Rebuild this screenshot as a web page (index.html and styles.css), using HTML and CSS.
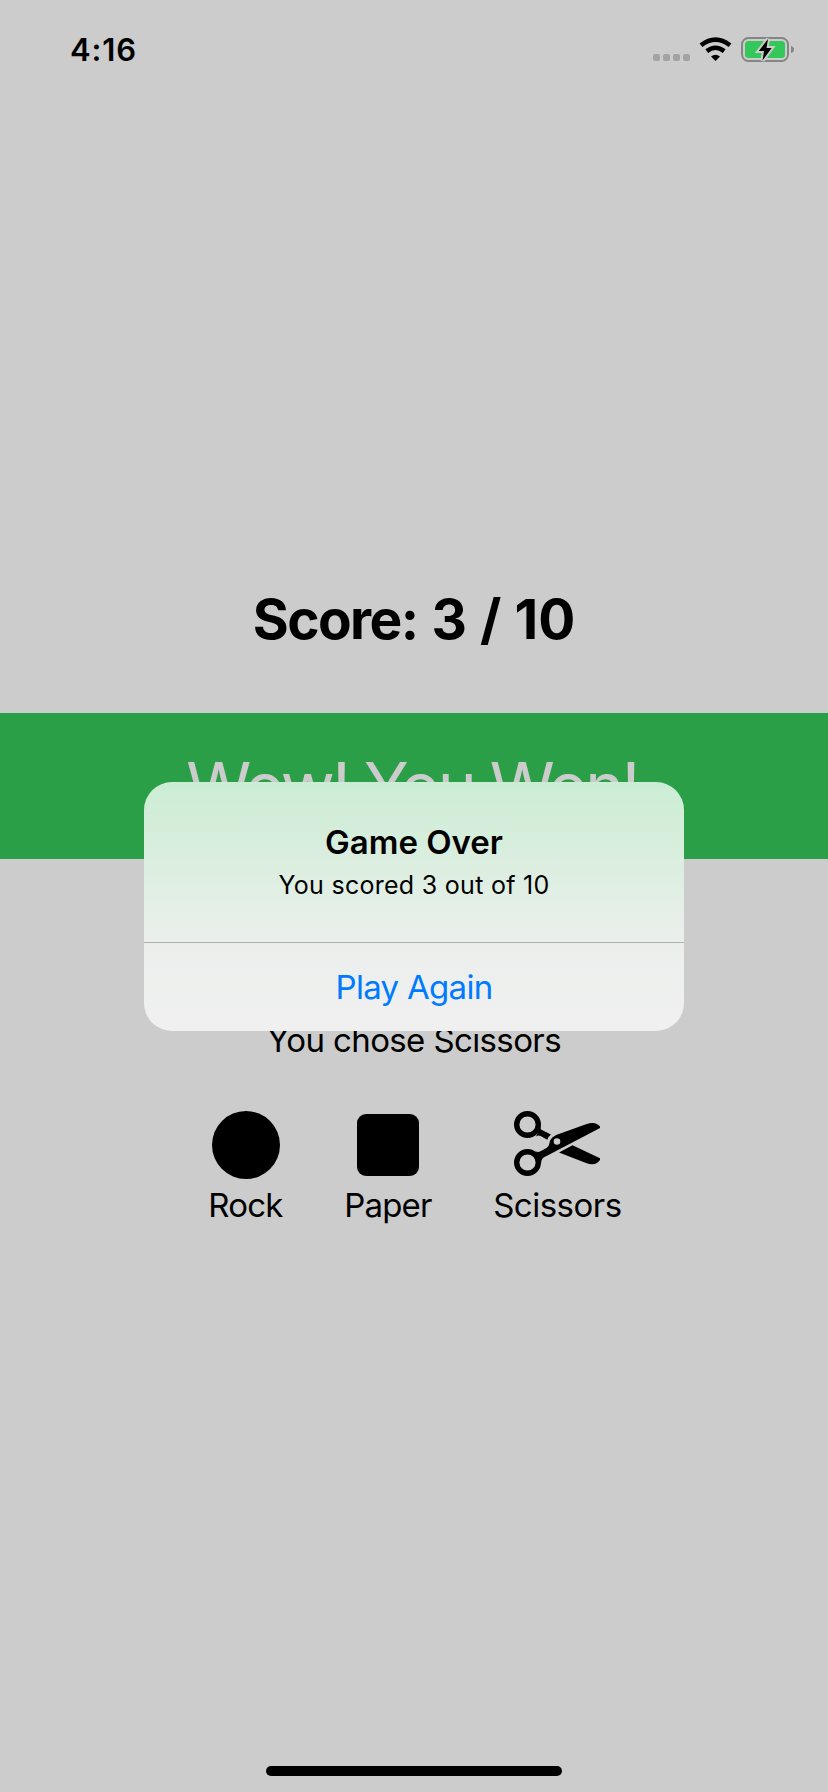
FILE: index.html
```html
<!DOCTYPE html>
<html lang="en">
<head>
<meta charset="utf-8">
<title>Rock Paper Scissors</title>
<link rel="stylesheet" href="styles.css">
</head>
<body>
<div class="screen">
  <header class="status">
    <span class="time">4:16</span>
    <svg class="indicators" width="142" height="26" viewBox="0 0 142 26">
      <g fill="#a3a3a3"><rect x="0" y="17" width="7" height="7" rx="2"/><rect x="10" y="17" width="7" height="7" rx="2"/><rect x="20" y="17" width="7" height="7" rx="2"/><rect x="30" y="17" width="7" height="7" rx="2"/></g>
      <g fill="none" stroke="#000" stroke-width="4.6"><path d="M48 8.3Q62.500 -2.900 77 8.300"/><path d="M53.800 14.100Q62.500 7.400 71.200 14.100"/></g>
      <path d="M58 19.500Q62.500 16.200 67 19.500L62.500 24Z"/>
      <rect x="89" y="1" width="46" height="23" rx="6.500" fill="none" stroke="#858585" stroke-width="2"/>
      <rect x="92" y="4" width="40" height="17" rx="3.500" fill="#34c759"/>
      <path d="M138 9Q141 10 141 12.500T138 16Z" fill="#858585"/>
      <path d="M115 2L105.800 14h5.200L109.500 23.500 118.700 11h-5.200Z" fill="#000" stroke="#ccc" stroke-width="4" paint-order="stroke"/>
    </svg>
  </header>
  <h1 class="score"><span class="label">Score:</span> 3 / 10</h1>
  <div class="banner"><span>Wow! You Won!</span></div>
  <p class="choice">You chose Scissors</p>
  <div class="options">
    <div class="option rock">
      <svg width="68" height="68" viewBox="0 0 68 68"><circle cx="34" cy="34" r="34"/></svg>
      <span>Rock</span>
    </div>
    <div class="option paper">
      <svg width="62" height="68" viewBox="0 0 62 68"><rect y="3" width="62" height="62" rx="9"/></svg>
      <span>Paper</span>
    </div>
    <div class="option scissors">
      <svg width="86" height="68" viewBox="0 0 86 68">
        <g fill="none" stroke="#000" stroke-width="5.400"><circle cx="13.500" cy="13.500" r="10.800"/><circle cx="13.500" cy="51.500" r="10.800"/></g>
        <path d="M26.700 15.500Q25.800 18 28 19L37 23.500Q34.300 25.500 33.300 28.700L26.500 25Q24.500 24 22 25.500Z"/>
        <path fill-rule="evenodd" d="M21.500 40.200Q24 41.600 26.500 40.200L32.500 37Q35 35.700 35.200 33Q35.600 27.500 41 24.700Q42 24.100 43.500 23.500L72 13.300Q81.500 9.800 86 15.500V17L33 44.700Q27 46.800 27.200 52Z M43 27.200a3.300 3.300 0 1 0 0 6.600a3.300 3.300 0 1 0 0 -6.600Z"/>
        <path d="M45 41.500L58.500 34.200L86 47.300V49Q81.500 55.500 72 52Z"/>
      </svg>
      <span>Scissors</span>
    </div>
  </div>
  <div class="home"></div>
  <div class="alert" role="alertdialog">
    <h2 class="title">Game Over</h2>
    <p class="message">You scored 3 out of 10</p>
    <button class="again"><span>Play Again</span></button>
  </div>
</div>
</body>
</html>
```

FILE: styles.css
```css
* { box-sizing: border-box; margin: 0; padding: 0; }
body { background: #ccc; color: #000; font-family: Inter, Roboto, sans-serif; }
.screen { position: relative; width: 828px; height: 1792px; display: flex; flex-direction: column; align-items: center; overflow: hidden; white-space: nowrap; }
.status { width: 100%; height: 74px; padding: 26px 33px 0 70px; display: flex; justify-content: space-between; align-items: flex-start; }
.time { font-size: 31px; font-weight: 600; line-height: 48px; letter-spacing: 0.9px; }
.indicators { margin-top: 11px; }
.score { margin-top: 512px; font-size: 55px; font-weight: 700; line-height: 66px; }
.score .label { letter-spacing: -1.6px; margin-right: 1px; }
.banner { width: 100%; height: 146px; margin-top: 61px; padding-right: 4px; background: #2b9f48; color: #ccc; display: flex; align-items: center; justify-content: center; font-size: 66px; line-height: 80px; letter-spacing: -2.8px; }
.choice { margin-top: 161px; font-size: 33px; line-height: 40px; letter-spacing: -0.62px; }
.options { display: flex; gap: 61.5px; margin-top: 51px; padding-left: 2px; }
.option { display: flex; flex-direction: column; align-items: center; gap: 6px; font-size: 33px; line-height: 40px; letter-spacing: -0.8px; }
.option.scissors { letter-spacing: -0.5px; }
.home { width: 296px; height: 10px; border-radius: 5px; background: #000; margin-top: auto; margin-bottom: 16px; }
.alert { position: absolute; left: 144px; top: 782px; width: 540px; height: 249px; border-radius: 28px; overflow: hidden; display: flex; flex-direction: column; align-items: center; background: linear-gradient(#cbedd4 0%, #dceee0 34%, #ebefec 64%, #f0f0f0 100%); }
.title { margin-top: 40px; font-size: 33px; font-weight: 600; line-height: 40px; }
.message { margin-top: 6px; font-size: 25px; line-height: 34px; letter-spacing: 0.28px; }
.again { width: 100%; margin-top: auto; height: 89px; border: 0; border-top: 1px solid #adb0ae; background: none; color: #007aff; font: 400 33px/40px Inter, Roboto, sans-serif; letter-spacing: -0.7px; }
```
